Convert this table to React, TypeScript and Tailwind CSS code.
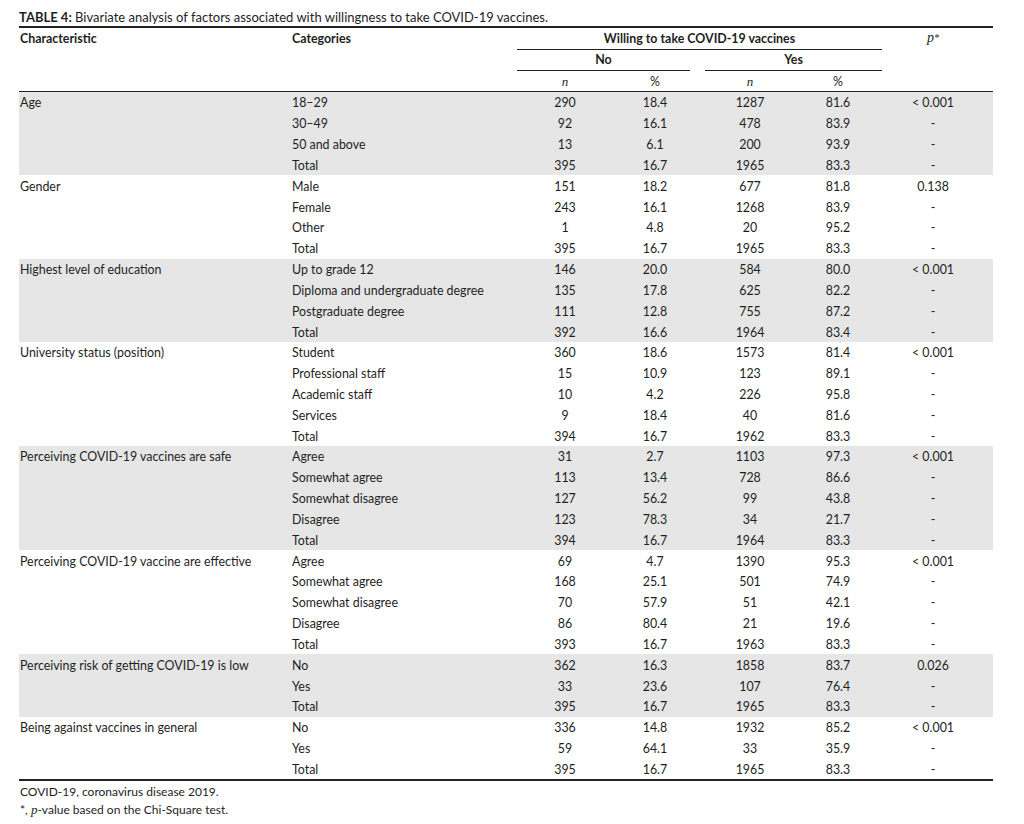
import React from "react";

type Row = [string, string, string, string, string, string];
type Group = { name: string; rows: Row[] };

const groups: Group[] = [
  {
    name: "Age",
    rows: [
      ["18–29", "290", "18.4", "1287", "81.6", "< 0.001"],
      ["30–49", "92", "16.1", "478", "83.9", "-"],
      ["50 and above", "13", "6.1", "200", "93.9", "-"],
      ["Total", "395", "16.7", "1965", "83.3", "-"],
    ],
  },
  {
    name: "Gender",
    rows: [
      ["Male", "151", "18.2", "677", "81.8", "0.138"],
      ["Female", "243", "16.1", "1268", "83.9", "-"],
      ["Other", "1", "4.8", "20", "95.2", "-"],
      ["Total", "395", "16.7", "1965", "83.3", "-"],
    ],
  },
  {
    name: "Highest level of education",
    rows: [
      ["Up to grade 12", "146", "20.0", "584", "80.0", "< 0.001"],
      ["Diploma and undergraduate degree", "135", "17.8", "625", "82.2", "-"],
      ["Postgraduate degree", "111", "12.8", "755", "87.2", "-"],
      ["Total", "392", "16.6", "1964", "83.4", "-"],
    ],
  },
  {
    name: "University status (position)",
    rows: [
      ["Student", "360", "18.6", "1573", "81.4", "< 0.001"],
      ["Professional staff", "15", "10.9", "123", "89.1", "-"],
      ["Academic staff", "10", "4.2", "226", "95.8", "-"],
      ["Services", "9", "18.4", "40", "81.6", "-"],
      ["Total", "394", "16.7", "1962", "83.3", "-"],
    ],
  },
  {
    name: "Perceiving COVID-19 vaccines are safe",
    rows: [
      ["Agree", "31", "2.7", "1103", "97.3", "< 0.001"],
      ["Somewhat agree", "113", "13.4", "728", "86.6", "-"],
      ["Somewhat disagree", "127", "56.2", "99", "43.8", "-"],
      ["Disagree", "123", "78.3", "34", "21.7", "-"],
      ["Total", "394", "16.7", "1964", "83.3", "-"],
    ],
  },
  {
    name: "Perceiving COVID-19 vaccine are effective",
    rows: [
      ["Agree", "69", "4.7", "1390", "95.3", "< 0.001"],
      ["Somewhat agree", "168", "25.1", "501", "74.9", "-"],
      ["Somewhat disagree", "70", "57.9", "51", "42.1", "-"],
      ["Disagree", "86", "80.4", "21", "19.6", "-"],
      ["Total", "393", "16.7", "1963", "83.3", "-"],
    ],
  },
  {
    name: "Perceiving risk of getting COVID-19 is low",
    rows: [
      ["No", "362", "16.3", "1858", "83.7", "0.026"],
      ["Yes", "33", "23.6", "107", "76.4", "-"],
      ["Total", "395", "16.7", "1965", "83.3", "-"],
    ],
  },
  {
    name: "Being against vaccines in general",
    rows: [
      ["No", "336", "14.8", "1932", "85.2", "< 0.001"],
      ["Yes", "59", "64.1", "33", "35.9", "-"],
      ["Total", "395", "16.7", "1965", "83.3", "-"],
    ],
  },
];

const cols = "grid grid-cols-[273px_225px_96px_84px_106px_70px_120px]";
const serif = "font-['Liberation_Serif',serif] italic";

export default function App() {
  return (
    <div className="w-[1024px] h-[824px] bg-white text-[#1e1e1e] font-['Lato',sans-serif] text-[12.4px]">
      <div className="ml-[19px] w-[974px]">
        <div className="h-[26px] pt-[9px] leading-[16px] text-[13px] whitespace-nowrap">
          <span className="font-bold">TABLE 4:</span> Bivariate analysis of factors associated with willingness to take COVID-19 vaccines.
        </div>
        <div className="border-t-2 border-[#222]" />
        <div className={`${cols} grid-rows-[22px_21px_20px] border-b border-[#222] leading-[16px]`}>
          <div className="row-start-1 col-start-1 font-bold pl-px pt-[3px]">Characteristic</div>
          <div className="row-start-1 col-start-2 font-bold pt-[3px]">Categories</div>
          <div className="row-start-1 col-start-3 col-span-4">
            <div className="w-[365px] h-[22px] border-b border-[#222] text-center font-bold pt-[3px]">
              Willing to take COVID-19 vaccines
            </div>
          </div>
          <div className={`row-start-1 col-start-7 text-center pt-[2px] text-[14px] ${serif}`}>
            p<sup className="text-[10px] relative top-[-1px]">*</sup>
          </div>
          <div className="row-start-2 col-start-3 col-span-2">
            <div className="w-[173px] h-[21px] border-b border-[#222] text-center font-bold pt-[2px]">No</div>
          </div>
          <div className="row-start-2 col-start-5 col-span-2">
            <div className="ml-[8px] w-[177px] h-[21px] border-b border-[#222] text-center font-bold pt-[2px]">Yes</div>
          </div>
          <div className={`row-start-3 col-start-3 text-center pt-[3px] text-[13px] ${serif}`}>n</div>
          <div className="row-start-3 col-start-4 text-center pt-[3px]">%</div>
          <div className={`row-start-3 col-start-5 text-center pt-[3px] text-[13px] ${serif}`}>n</div>
          <div className="row-start-3 col-start-6 text-center pt-[3px]">%</div>
        </div>
        <div>
          {groups.map((g, gi) => (
            <div key={g.name} className={gi % 2 === 0 ? "bg-[#e6e6e6]" : "bg-white"}>
              {g.rows.map((r, ri) => (
                <div key={ri} className={`${cols} h-[20.84px] items-center pt-[2px] leading-[16px]`}>
                  <div className="pl-px whitespace-nowrap">{ri === 0 ? g.name : ""}</div>
                  <div className="whitespace-nowrap">{r[0]}</div>
                  <div className="text-center">{r[1]}</div>
                  <div className="text-center">{r[2]}</div>
                  <div className="text-center">{r[3]}</div>
                  <div className="text-center">{r[4]}</div>
                  <div className="text-center">{r[5]}</div>
                </div>
              ))}
            </div>
          ))}
        </div>
        <div className="border-t-2 border-[#222]" />
        <div className="pt-[2px] pl-px text-[12px] leading-[18px]">
          <div>COVID-19, coronavirus disease 2019.</div>
          <div>
            *, <span className={`${serif} text-[13px]`}>p</span>-value based on the Chi-Square test.
          </div>
        </div>
      </div>
    </div>
  );
}
